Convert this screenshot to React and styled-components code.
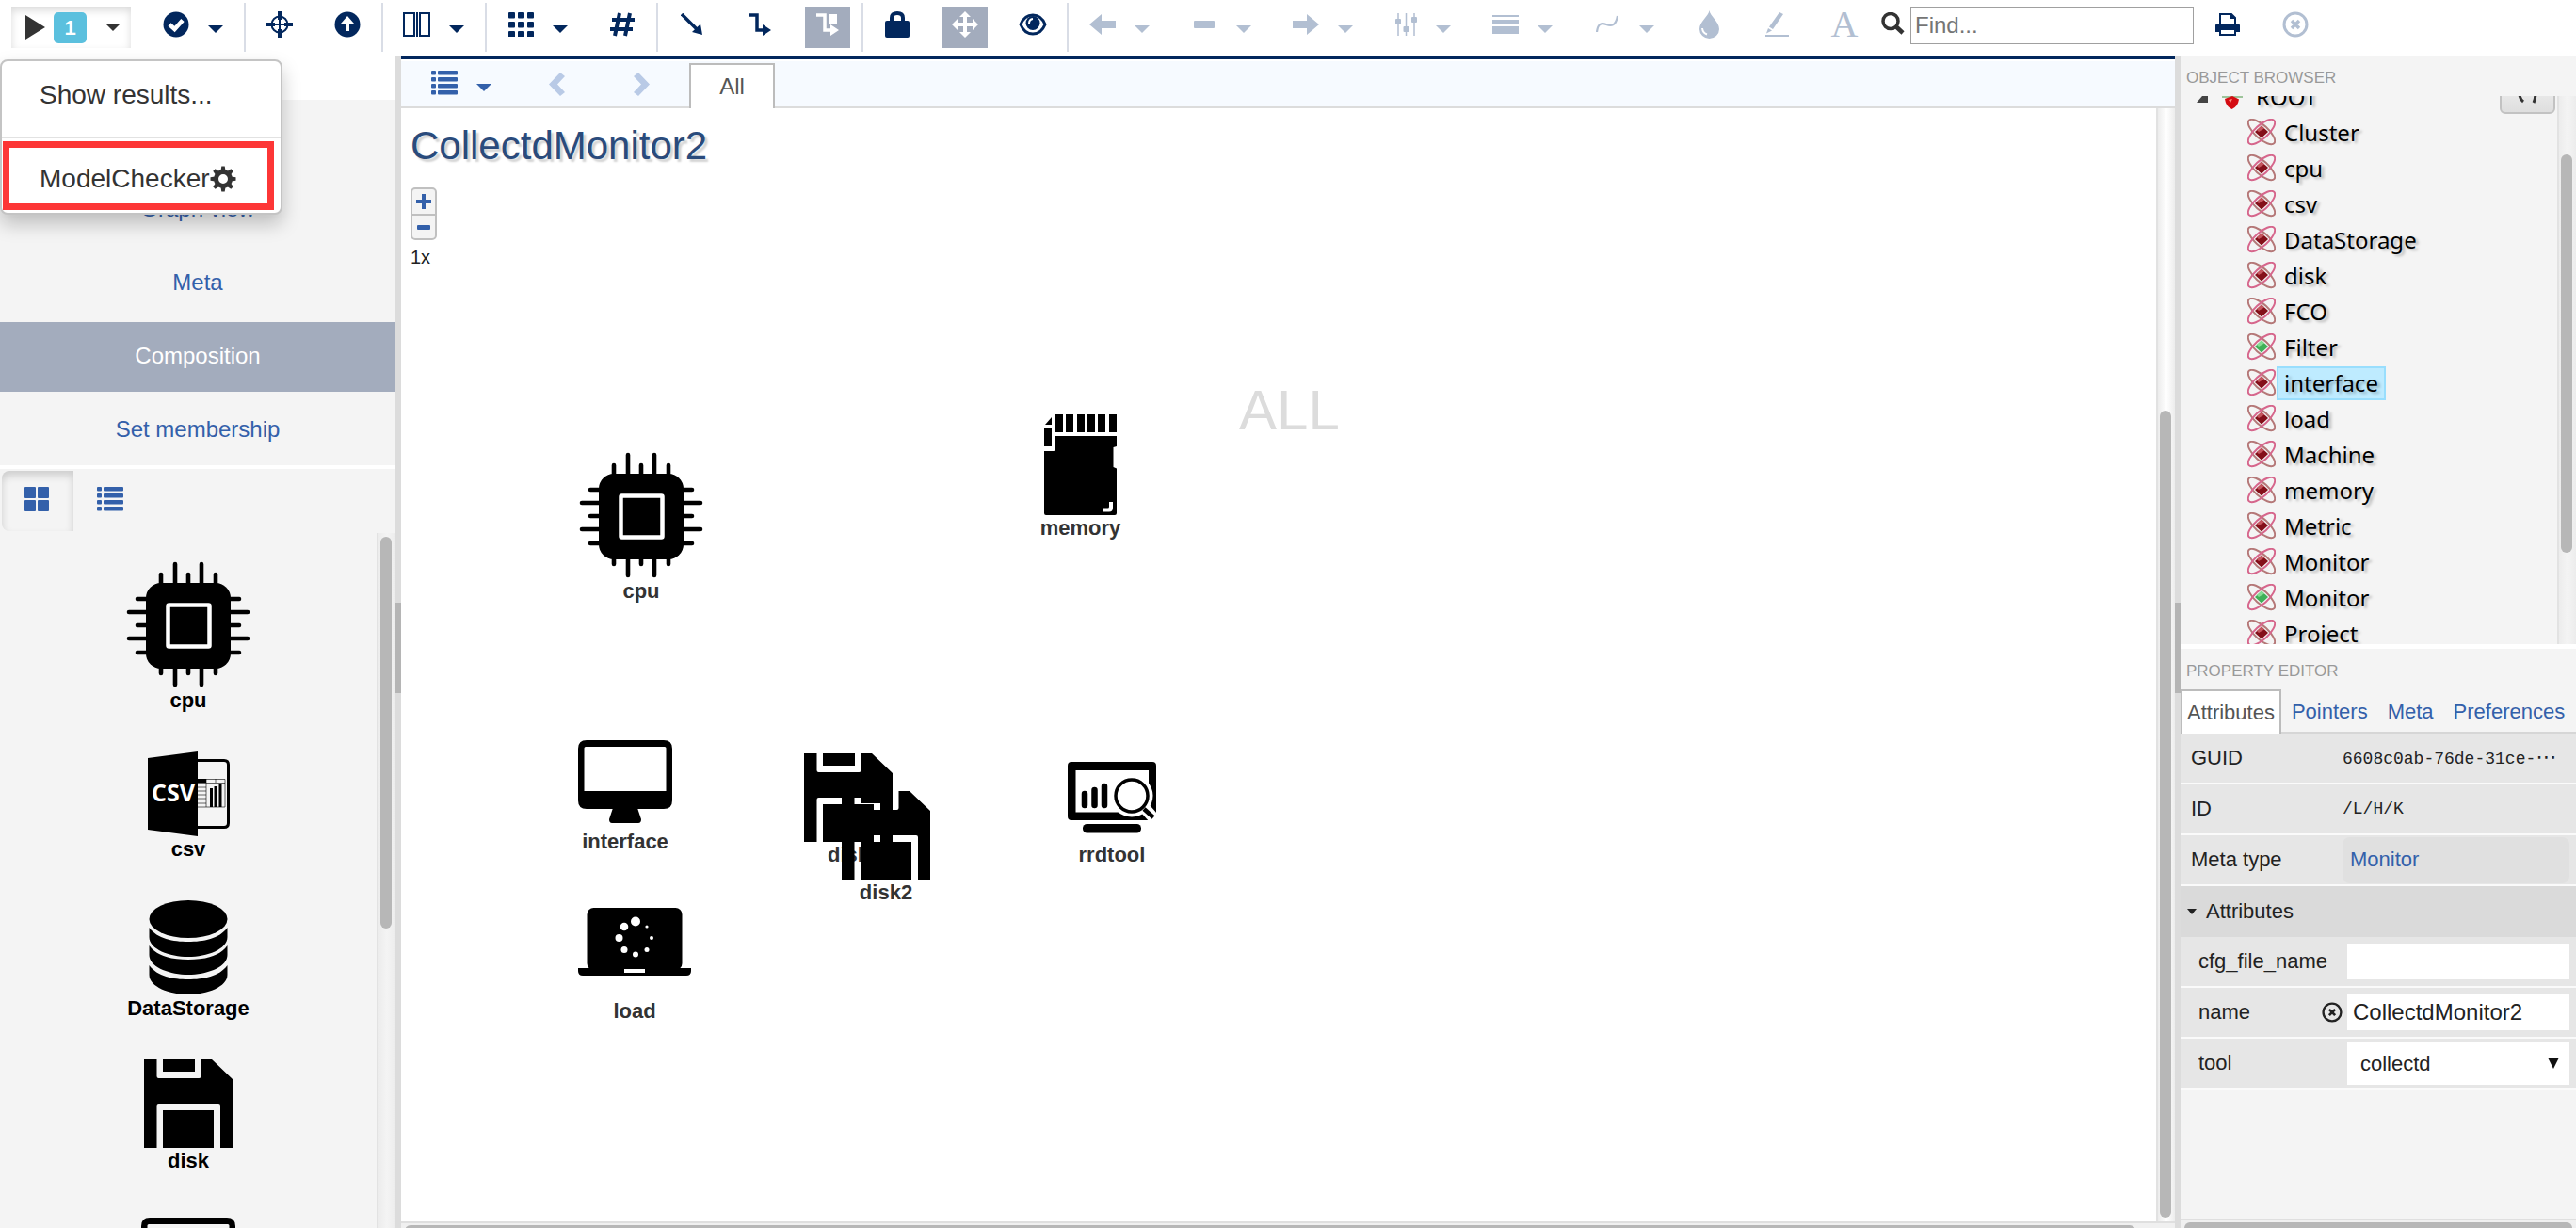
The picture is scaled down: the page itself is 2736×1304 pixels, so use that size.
import React from "react";
import styled, { createGlobalStyle, css } from "styled-components";

const navy = "#02275d";
const blue = "#3360aa";
const panel = "#f4f4f4";
const faded = "#b2bfd2";

const GlobalStyle = createGlobalStyle`
  *, *::before, *::after { box-sizing: border-box; }
  body { margin: 0; background: #fff; overflow: hidden; }
  body, button, input, select { font-family: "Liberation Sans", Arial, sans-serif; }
  button { border: 0; padding: 0; background: none; color: inherit; font-size: inherit; cursor: pointer; }
  svg { display: block; flex: none; }
  ul { list-style: none; margin: 0; padding: 0; }
  a { text-decoration: none; }
`;

/* ---------- page frame ---------- */

const Page = styled.div`
  display: flex;
  flex-direction: column;
  height: 100vh;
`;
const Body = styled.div`
  flex: 1;
  min-height: 0;
  display: flex;
`;
const Splitter = styled.div`
  flex: none;
  width: 6px;
  background: #dcdcdc;
  display: flex;
  flex-direction: column;
  justify-content: center;
  padding-top: 12px;
`;
const Grip = styled.div`
  height: 96px;
  background: #b5b5b5;
`;

/* ---------- scroll bars ---------- */

const Track = styled.div`
  flex: none;
  width: 20px;
  padding: 4px;
  border-left: 2px solid #e2e2e2;
  padding-left: 2px;
  background: linear-gradient(to right, #ececec, ${(p) => p.$bg || panel} 50%, #ececec);
`;
const Thumb = styled.div`
  width: 12px;
  height: ${(p) => p.$size};
  border-radius: 6px;
  background: #b7b7b7;
`;
const BottomTrack = styled.div`
  flex: none;
  height: ${(p) => p.$height}px;
  padding: 2px 4px 0;
  border-top: 2px solid #dfdfdf;
  background: #f0f0f0;
  overflow: hidden;
`;
const BottomThumb = styled.div`
  width: ${(p) => p.$size};
  height: 12px;
  border-radius: 6px;
  background: #b7b7b7;
`;

/* ---------- top tool bar ---------- */

const ToolBar = styled.header`
  flex: none;
  display: flex;
  height: 59px;
  background: #fff;
`;
const Group = styled.div`
  display: flex;
  gap: 24px;
  padding: 7px 12px 0;
`;
const Divider = styled.div`
  width: 2px;
  height: 52px;
  margin-top: 3px;
  background: #d9dde6;
`;
const Split = styled.div`
  display: flex;
`;
const Tool = styled.button`
  width: ${(p) => (p.$narrow ? 44 : 48)}px;
  height: 44px;
  padding-bottom: 6px;
  display: flex;
  align-items: center;
  justify-content: center;
  color: ${(p) => (p.$on ? "#fff" : p.$off ? faded : p.$color || navy)};
  background: ${(p) => (p.$on ? "#a3acbd" : "transparent")};
`;
const CaretTool = styled.button`
  width: 36px;
  height: 44px;
  padding-top: 4px;
  display: flex;
  align-items: center;
  justify-content: center;
  color: ${(p) => (p.$off ? faded : p.$color || navy)};
`;
const RunTool = styled.button`
  width: 127px;
  height: 44px;
  padding: 0 11px 0 15px;
  display: flex;
  align-items: center;
  color: #333;
  box-shadow: inset 0 4px 8px rgba(0, 0, 0, 0.15);
`;
const Badge = styled.span`
  width: 35px;
  height: 33px;
  margin: 0 20px 0 9px;
  border-radius: 5px;
  background: #5bc0de;
  color: #fff;
  font-size: 22px;
  font-weight: bold;
  line-height: 33px;
  text-align: center;
`;
const FontGlyph = styled.span`
  font-family: "Liberation Serif", serif;
  font-size: 40px;
  line-height: 44px;
`;
const Search = styled.div`
  display: flex;
  align-items: flex-start;
  gap: 6px;
  padding: 7px 0 0 3px;
`;
const SearchMark = styled.span`
  padding-top: 6px;
`;
const FindBox = styled.input`
  width: 301px;
  height: 40px;
  padding: 0 4px;
  border: 1px solid #a0a0a0;
  font-size: 24px;
  &::placeholder { color: #757575; opacity: 1; }
`;

/* ---------- run menu ---------- */

const RunMenu = styled.ul`
  position: absolute;
  z-index: 5;
  left: 0;
  top: 63px;
  width: 300px;
  border: 2px solid #c4c4c4;
  border-radius: 8px;
  background: #fff;
  box-shadow: 0 10px 20px rgba(0, 0, 0, 0.22);
`;
const RunMenuItem = styled.li`
  display: flex;
  height: ${(p) => (p.$marked ? 73 : 82)}px;
  ${(p) =>
    p.$marked
      ? css`margin: 3px 7px 3px 1px; border: 7px solid #fd3636;`
      : css`border-bottom: 2px solid #e2e2e2;`}
`;
const MenuButton = styled.button`
  flex: 1;
  display: flex;
  align-items: center;
  padding: ${(p) => (p.$marked ? "6px 0 0 32px" : "0 0 8px 40px")};
  color: #333;
  font-size: 28px;
`;

/* ---------- left side ---------- */

const Side = styled.aside`
  flex: none;
  width: 420px;
  display: flex;
  flex-direction: column;
  background: ${panel};
`;
const SideHead = styled.div`
  flex: none;
  height: 47px;
  background: #fff;
`;
const Views = styled.ul`
  flex: none;
  display: flex;
  flex-direction: column;
  gap: 4px;
  padding-top: 80px;
  border-bottom: 4px solid #fff;
`;
const ViewLink = styled.a`
  display: block;
  height: 74px;
  color: ${(p) => (p.$on ? "#fff" : blue)};
  background: ${(p) => (p.$on ? "#a3acbd" : "transparent")};
  font-size: 24px;
  line-height: 72px;
  text-align: center;
`;
const PaletteTabs = styled.div`
  flex: none;
  display: flex;
  height: 68px;
  padding: 2px;
`;
const PaletteTab = styled.button`
  width: ${(p) => (p.$on ? 76 : 80)}px;
  height: 64px;
  padding: 0 2px 4px 0;
  display: flex;
  align-items: center;
  justify-content: center;
  color: ${blue};
  ${(p) => p.$on && css`border-radius: 8px 0 0 8px; box-shadow: inset 0 5px 8px rgba(0, 0, 0, 0.16);`}
`;
const PaletteBody = styled.div`
  flex: 1;
  min-height: 0;
  display: flex;
`;
const Palette = styled.ul`
  flex: 1;
  display: flex;
  flex-direction: column;
  gap: 42px;
  padding-top: 30px;
  overflow: hidden;
`;
const Part = styled.li`
  flex: none;
  display: flex;
  flex-direction: column;
  align-items: center;
  gap: 2px;
  color: #000;
`;
const PartName = styled.span`
  font-size: 22px;
  font-weight: bold;
  line-height: 24px;
  white-space: nowrap;
`;

/* ---------- centre ---------- */

const Main = styled.main`
  flex: 1;
  min-width: 0;
  display: flex;
  flex-direction: column;
  border-top: 4px solid ${navy};
`;
const SubBar = styled.div`
  flex: none;
  display: flex;
  align-items: flex-end;
  height: 52px;
  padding-left: 22px;
  border-top: 2px solid #fff;
  border-bottom: 2px solid #dcdcdc;
  background: #f6faff;
  color: ${blue};
`;
const Steps = styled.div`
  display: flex;
  gap: 24px;
  padding: 0 18px 0 26px;
`;
const Step = styled.button`
  width: 66px;
  height: 48px;
  display: flex;
  align-items: center;
  justify-content: center;
  color: #b9cae6;
`;
const AspectTab = styled.button`
  width: 91px;
  height: 48px;
  margin-bottom: -2px;
  border: 2px solid #bcbcbc;
  border-bottom: 0;
  background: #fff;
  color: #555;
  font-size: 24px;
  line-height: 46px;
`;
const Work = styled.div`
  flex: 1;
  min-height: 0;
  display: flex;
`;
const Canvas = styled.section`
  flex: 1;
  position: relative;
  overflow: hidden;
  padding: 16px 10px;
  background: #fff;
`;
const CanvasTrack = styled(Track)`
  display: flex;
  flex-direction: column;
  justify-content: flex-end;
`;
const Title = styled.h1`
  margin: 0 0 20px;
  color: #2a4b7c;
  font-size: 42px;
  font-weight: normal;
  line-height: 48px;
  text-shadow: 3px 3px 2px #d4d4d4;
`;
const Zoom = styled.div`
  width: 28px;
  border: 2px solid #c0c0c0;
  border-radius: 5px;
  background: ${panel};
  color: ${blue};
`;
const ZoomButton = styled.button`
  width: 24px;
  height: 26px;
  display: flex;
  align-items: center;
  justify-content: center;
  & + & { border-top: 2px solid #c0c0c0; }
`;
const ZoomLevel = styled.div`
  margin-top: 6px;
  color: #222;
  font-size: 20px;
  line-height: 24px;
`;
const Watermark = styled.div`
  position: absolute;
  left: 890px;
  top: 291px;
  color: #dcdcdc;
  font-size: 60px;
  line-height: 60px;
`;
const Node = styled.div`
  position: absolute;
  left: ${(p) => p.$x}px;
  top: ${(p) => p.$y}px;
  width: ${(p) => p.$w}px;
  display: flex;
  flex-direction: column;
  align-items: center;
  gap: 2px;
`;
const NodeName = styled(PartName)`
  color: #333;
`;

/* ---------- right side ---------- */

const Right = styled.aside`
  flex: none;
  width: 420px;
  display: flex;
  flex-direction: column;
  background: ${panel};
`;
const Caption = styled.h2`
  flex: none;
  height: 43px;
  margin: 0;
  padding: 4px 6px 0;
  color: #999;
  font-size: 17px;
  font-weight: normal;
  line-height: 40px;
`;
const TreeBox = styled.div`
  flex: none;
  display: flex;
  height: 582px;
  overflow: hidden;
`;
const Tree = styled.ul`
  flex: 1;
  margin-top: -18px;
`;
const ObjectTrack = styled(Track)`
  padding-top: 62px;
`;
const TreeRow = styled.li`
  display: flex;
  align-items: center;
  height: 38px;
  gap: 1px;
  padding-left: ${(p) => (p.$root ? 16 : 71)}px;
`;
const TreeName = styled.a`
  padding: 0 6px;
  border: 2px solid ${(p) => (p.$on ? "#99defd" : "transparent")};
  background: ${(p) => (p.$on ? "#beebff" : "transparent")};
  color: #000;
  font-family: "Noto Sans", sans-serif;
  font-size: 24px;
  line-height: 32px;
  text-shadow: 3px 2px 3px rgba(0, 0, 0, 0.25);
`;
const FilterButton = styled.button`
  width: 59px;
  height: 44px;
  margin: 0 2px 8px auto;
  border: 2px solid #c2c2c2;
  border-radius: 6px;
  background: linear-gradient(#f4f4f4, #dedede);
  display: flex;
  align-items: center;
  justify-content: center;
`;
const Editor = styled.section`
  flex: 1;
  min-height: 0;
  display: flex;
  flex-direction: column;
  border-top: 5px solid #fff;
`;
const EditorTabs = styled.div`
  display: flex;
  height: 47px;
  border-bottom: 2px solid #d6d6d6;
`;
const EditorTab = styled.button`
  height: 49px;
  padding: ${(p) => (p.$on ? "0 5px 1px" : "2px 10px 3px")};
  border: ${(p) => (p.$on ? "2px solid #bcbcbc" : "0")};
  border-bottom: 0;
  background: ${(p) => (p.$on ? "#fff" : "none")};
  color: ${(p) => (p.$on ? "#555" : blue)};
  font-size: 22px;
  line-height: 42px;
  & + & { margin-left: 1px; }
`;
const Properties = styled.div`
  flex: 1;
  font-size: 22px;
  color: #222;
`;
const Property = styled.div`
  display: flex;
  align-items: center;
  height: 54px;
  padding: 0 7px 0 ${(p) => (p.$nested ? 19 : 11)}px;
  border-bottom: 2px solid #fafafa;
  background: #e6e6e6;
`;
const PropertyName = styled.label`
  flex: 1;
`;
const Value = styled.output`
  width: 241px;
  font-family: "Liberation Mono", monospace;
  font-size: 18px;
  line-height: 24px;
  white-space: nowrap;
`;
const Dots = styled.span`
  font-family: "DejaVu Sans", sans-serif;
  font-size: 22px;
  line-height: 22px;
`;
const MetaLink = styled.a`
  width: 241px;
  height: 49px;
  padding-left: 8px;
  border-radius: 8px;
  background: #e0e0e0;
  color: ${blue};
  line-height: 47px;
`;
const Section = styled.button`
  display: flex;
  align-items: center;
  gap: 10px;
  width: 100%;
  height: 54px;
  padding-left: 7px;
  background: #dadada;
  font-size: 22px;
`;
const TextBox = styled.input`
  width: 236px;
  height: 38px;
  padding: 0 6px;
  border: 0;
  background: #fff;
  color: #222;
  font-size: 24px;
`;
const Reset = styled.button`
  margin-right: 5px;
`;
const SelectBox = styled.div`
  position: relative;
  width: 236px;
`;
const Choice = styled.select`
  appearance: none;
  display: block;
  width: 100%;
  height: 46px;
  padding: 0 14px;
  border: 0;
  border-radius: 0;
  background: #fff;
  color: #222;
  font-size: 22px;
`;
const ChoiceMark = styled.span`
  position: absolute;
  right: 11px;
  top: 17px;
  pointer-events: none;
`;

/* ---------- icons ---------- */

const Svg = ({ w, h, box, children }) => (
  <svg width={w} height={h} viewBox={box || `0 0 ${w} ${h}`} fill="currentColor" aria-hidden="true">
    {children}
  </svg>
);

const CaretIcon = () => (
  <Svg w={16} h={8}><path d="M0 0H16L8 8Z" /></Svg>
);
const icons = {
  play: <Svg w={21} h={26}><path d="M0 0L21 13L0 26Z" /></Svg>,
  check: (
    <Svg w={28} h={28}>
      <circle cx="14" cy="14" r="13.5" />
      <path d="M7 14L12.500 19L21 9.500" fill="none" stroke="#fff" strokeWidth="4.500" />
    </Svg>
  ),
  crosshair: (
    <Svg w={28} h={28}>
      <g fill="none" stroke="currentColor">
        <circle cx="14" cy="14" r="8.500" strokeWidth="2" />
        <path d="M14 0V9M14 19V28M0 14H9M19 14H28" strokeWidth="4" />
        <path d="M14 9V19M9 14H19" strokeWidth="2" />
      </g>
    </Svg>
  ),
  up: (
    <Svg w={28} h={28}>
      <circle cx="14" cy="14" r="13.5" />
      <path d="M14 5L21 13H16V21H12V13H7Z" fill="#fff" />
    </Svg>
  ),
  columns: (
    <Svg w={30} h={28}>
      <g fill="none" stroke="currentColor" strokeWidth="2">
        <path d="M1 2H12V26H1ZM18 2H28V26H18Z" />
        <path d="M15 1V27" />
      </g>
    </Svg>
  ),
  grid: (
    <Svg w={27} h={26}>
      {[0, 10, 20].map((y) => [0, 10, 20].map((x) => <rect key={`${x}-${y}`} x={x} y={y} width="7" height="6.500" rx="1" />))}
    </Svg>
  ),
  hash: (
    <Svg w={28} h={26}>
      <path d="M11 1L6 25M22 1L17 25M3 8H27M1 18H25" fill="none" stroke="currentColor" strokeWidth="4" />
    </Svg>
  ),
  diagonal: (
    <Svg w={24} h={24}>
      <path d="M1 1L17 17" stroke="currentColor" strokeWidth="3.500" />
      <path d="M23 23L12 20L21 11.500Z" />
    </Svg>
  ),
  elbow: (
    <Svg w={26} h={24}>
      <path d="M1 2H10V18H18" fill="none" stroke="currentColor" strokeWidth="3.500" />
      <path d="M16 12L25 18L16 24Z" />
    </Svg>
  ),
  elbowBox: (
    <Svg w={26} h={24}>
      <path d="M1 2H10V18H18" fill="none" stroke="currentColor" strokeWidth="3.500" />
      <path d="M16 12L25 18L16 24ZM14 1H23V11H14Z" />
    </Svg>
  ),
  lock: (
    <Svg w={26} h={28}>
      <rect y="10" width="26" height="18" rx="2" />
      <path d="M7 11V7Q7 2 13 2T19 7V11" fill="none" stroke="currentColor" strokeWidth="4" />
    </Svg>
  ),
  move: (
    <Svg w={28} h={28}>
      <path d="M14 0L20 6H16V12H22V8L28 14L22 20V16H16V22H20L14 28L8 22H12V16H6V20L0 14L6 8V12H12V6H8Z" />
    </Svg>
  ),
  eye: (
    <Svg w={30} h={24}>
      <path d="M15 2C8 2 4 7 2 12C4 17 8 22 15 22S26 17 28 12C26 7 22 2 15 2Z" fill="none" stroke="currentColor" strokeWidth="3" />
      <circle cx="15" cy="10.500" r="7.500" />
      <path d="M11 11Q11 6.500 15 6" fill="none" stroke="#fff" strokeWidth="2" />
    </Svg>
  ),
  left: <Svg w={28} h={22}><path d="M0 11L13 0V7H28V15H13V22Z" /></Svg>,
  minus: <Svg w={22} h={8}><rect width="22" height="8" rx="1" /></Svg>,
  right: <Svg w={28} h={22}><path d="M28 11L15 0V7H0V15H15V22Z" /></Svg>,
  sliders: (
    <Svg w={23} h={24}>
      <path d="M3 0V24M11.500 0V24M20 0V24" stroke="currentColor" strokeWidth="1.500" />
      <rect y="6" width="6" height="6" rx="1" />
      <rect x="8.500" y="14" width="6" height="6" rx="1" />
      <rect x="17" y="4" width="6" height="6" rx="1" />
    </Svg>
  ),
  lines: <Svg w={28} h={20}><path d="M0 0H28V2H0ZM0 5H28V9H0ZM0 12H28V20H0Z" /></Svg>,
  curve: (
    <Svg w={24} h={20}>
      <path d="M1 18C2 9 6 8 11 10S21 12 23 1" fill="none" stroke="currentColor" strokeWidth="2.200" />
    </Svg>
  ),
  drop: (
    <Svg w={21} h={30}>
      <path d="M10.500 0C11 6 21 12 21 20A10.500 10 0 0 1 0 20C0 12 10 6 10.500 0Z" />
      <path d="M3 19Q3.500 24 8 25.500" fill="none" stroke="#fff" strokeWidth="2" />
    </Svg>
  ),
  pen: (
    <Svg w={25} h={26}>
      <path d="M0 24H25V26H0ZM15 0L19 2L8 18L4 15.500ZM3 17L7 19.500L1 22.500Z" />
    </Svg>
  ),
  search: (
    <Svg w={25} h={24}>
      <circle cx="10" cy="9.500" r="8" fill="none" stroke="#333" strokeWidth="3.500" />
      <path d="M15.500 15L23 22" stroke="#333" strokeWidth="4.500" />
    </Svg>
  ),
  print: (
    <Svg w={26} h={24}>
      <path d="M5 11V1H17L21 5V11" fill="none" stroke="currentColor" strokeWidth="2" />
      <path d="M16 0L22 6H16ZM2 11H24Q26 11 26 13V20H0V13Q0 11 2 11Z" />
      <rect x="5" y="17" width="16" height="6" fill="#fff" stroke="currentColor" strokeWidth="2" />
    </Svg>
  ),
  close: (
    <Svg w={28} h={28}>
      <circle cx="14" cy="14" r="12" fill="none" stroke="currentColor" strokeWidth="3" />
      <path d="M10 10L18 18M18 10L10 18" stroke="currentColor" strokeWidth="3.500" />
    </Svg>
  ),
  gear: (
    <Svg w={28} h={28}>
      <circle cx="14" cy="14" r="7.500" fill="none" stroke="#333" strokeWidth="5" />
      {[0, 45, 90, 135, 180, 225, 270, 315].map((a) => (
        <path key={a} d="M11.500 5L12.300 0.500H15.700L16.500 5Z" transform={`rotate(${a} 14 14)`} />
      ))}
    </Svg>
  ),
  list: (
    <Svg w={28} h={26}>
      {[0, 7, 14, 21].map((y) => (
        <g key={y}>
          <rect y={y} width="5" height="4.500" rx="1" />
          <rect x="7" y={y} width="21" height="4.500" rx="1" />
        </g>
      ))}
    </Svg>
  ),
  tiles: (
    <Svg w={26} h={26}>
      {[0, 14].map((y) => [0, 14].map((x) => <rect key={`${x}-${y}`} x={x} y={y} width="12" height="12" rx="1" />))}
    </Svg>
  ),
  prev: <Svg w={17} h={25}><path d="M12 0L17 4L9 12.500L17 21L12 25L0 12.500Z" /></Svg>,
  next: <Svg w={17} h={25}><path d="M5 0L0 4L8 12.500L0 21L5 25L17 12.500Z" /></Svg>,
  plus: <Svg w={16} h={16}><path d="M6 0H10V6H16V10H10V16H6V10H0V6H6Z" /></Svg>,
  dash: <Svg w={14} h={5}><rect width="14" height="5" rx="1" /></Svg>,
};

/* ---------- component drawings ---------- */

const parts = {
  cpu: {
    w: 132,
    draw: (
      <Svg w={132} h={134}>
        <path d="M37 14V119M52 3V131M66 14V119M80 3V131M95 14V119M12 40H120M3 54H129M12 68H120M3 82H129M12 97H120" stroke="currentColor" strokeWidth="4.600" strokeLinecap="round" />
        <rect x="21" y="23" width="90" height="91" rx="16" />
        <rect x="44.500" y="46.500" width="44" height="44" rx="1" fill="none" stroke="#fff" strokeWidth="4.500" />
      </Svg>
    ),
  },
  csv: {
    w: 87,
    draw: (
      <Svg w={87} h={90}>
        <path d="M53 9.500H81Q85.500 9.500 85.500 14V76Q85.500 80.500 81 80.500H53" fill="none" stroke="currentColor" strokeWidth="3" />
        <path d="M53 29.500H82V59H53M53 33.500H82M62 29V59M72 29V33M53 38H62M53 42H62M53 46H62M53 50H62M53 55H62" fill="none" stroke="currentColor" strokeWidth="1" opacity="0.600" />
        <path d="M0 7L53 0V90L0 83ZM53 29H62V33H53ZM66 39H69V59H66ZM70.500 37H73.500V59H70.500ZM75.500 34H78.500V59H75.500Z" />
        <text x="27" y="53" textAnchor="middle" fill="#fff" fontFamily="Open Sans, sans-serif" fontWeight="bold" fontSize="25">CSV</text>
      </Svg>
    ),
  },
  DataStorage: {
    w: 84,
    draw: (
      <Svg w={84} h={101}>
        <ellipse cx="42" cy="20" rx="41.500" ry="20" />
        {[0, 19, 40].map((y) => (
          <path key={y} transform={`translate(0 ${y})`} d="M0.500 29C9 41 26 44 42 44S75 41 83.500 29V39C83.500 52 62 60 42 60S0.500 52 0.500 39Z" />
        ))}
      </Svg>
    ),
  },
  disk: {
    w: 94,
    draw: (
      <Svg w={94} h={94}>
        <path d="M0 0H13.500V18Q13.500 20 15.500 20H58.500Q60.500 20 60.500 18V0H72L94 21V94H81V49Q81 47 79 47H15.500Q13.500 47 13.500 49V94H0ZM20 0H54V13H20ZM20 54H74V94H20Z" />
      </Svg>
    ),
  },
  interface: {
    w: 100,
    draw: (
      <Svg w={100} h={100} box="0 -6 100 100">
        <path fillRule="evenodd" d="M9 0H91Q100 0 100 9V64Q100 73 91 73H9Q0 73 0 64V9Q0 0 9 0ZM8 7Q6.500 7 6.500 8.500V54H93.500V8.500Q93.500 7 92 7Z" />
        <path d="M37 72H63L67 84Q67 88 64 88H36Q33 88 33 84Z" />
      </Svg>
    ),
  },
  memory: {
    w: 77,
    draw: (
      <Svg w={77} h={107}>
        {[12, 23, 35, 46, 57, 69].map((x) => <rect key={x} x={x} width="8" height="19" />)}
        <path d="M1 11L8 3V11ZM0 15H8V34H0ZM12 23H77V34L73.500 35V56L77 57.500V105Q77 107 75 107H2Q0 107 0 105V39H10Q12 39 12 37Z" />
        <path d="M69 93H73V99Q73 103.500 69 103.500H63V99.500H67.500Q69 99.500 69 98Z" fill="#fff" />
      </Svg>
    ),
  },
  rrdtool: {
    w: 94,
    draw: (
      <Svg w={94} h={94} box="0 -9 94 94">
        <path fillRule="evenodd" d="M4 0H90Q94 0 94 4V58Q94 62 90 62H4Q0 62 0 58V4Q0 0 4 0ZM8.500 9V53.500H86V9Z" />
        <circle cx="68" cy="36" r="22.500" fill="#fff" />
        <path d="M79 46L95 64" stroke="#fff" strokeWidth="12" />
        <path d="M18 34V46M28.500 30V46M39 26V46" stroke="currentColor" strokeWidth="6.500" strokeLinecap="round" />
        <circle cx="68" cy="36" r="17" fill="none" stroke="currentColor" strokeWidth="3.500" />
        <path d="M81 50L91 59" stroke="currentColor" strokeWidth="4.500" />
        <rect x="16" y="66" width="62" height="9.500" rx="4.500" />
      </Svg>
    ),
  },
  load: {
    w: 120,
    draw: (
      <Svg w={120} h={120} box="0 -24 120 120">
        <rect x="9.500" width="101" height="66" rx="7" />
        <path d="M0 64H120V67Q120 72 115 72H5Q0 72 0 67Z" />
        <g fill="#fff">
          <rect x="49" y="65" width="22" height="4" />
          <circle cx="61" cy="14.500" r="5" />
          <circle cx="49" cy="20" r="4.300" />
          <circle cx="43.500" cy="32" r="4" />
          <circle cx="49" cy="44.500" r="3.500" />
          <circle cx="61" cy="49.500" r="3" />
          <circle cx="73" cy="44.500" r="2.500" />
          <circle cx="78" cy="32" r="2" />
          <circle cx="73" cy="20" r="1.600" />
        </g>
      </Svg>
    ),
  },
};

const Atom = ({ green }) => (
  <svg width="30" height="30" viewBox="0 0 30 30" aria-hidden="true">
    <g fill="none" strokeWidth="2">
      <ellipse cx="15" cy="14" rx="18" ry="7" transform="rotate(42 15 14)" stroke="#b57878" />
      <ellipse cx="15" cy="14" rx="18" ry="7" transform="rotate(-42 15 14)" stroke="#d6668c" />
    </g>
    <path d="M15 7.500L22 14L15 20.500L8 14Z" fill={green ? "#3fb058" : "#84101a"} />
    <path d="M15 7.500L18 10.500L12 14L10 12Z" fill={green ? "#86dd93" : "#c4565e"} />
  </svg>
);
const Gem = () => (
  <svg width="30" height="30" viewBox="0 0 30 30" aria-hidden="true">
    <path d="M3 15H25" fill="none" stroke="#9dc49a" strokeWidth="2" />
    <path d="M6 17L14 14L21 17.500Q20 25 13.500 28Q7 25 6 17Z" fill="#d40b12" />
    <path d="M10 18L14 17L12 21Z" fill="#ff8a80" />
  </svg>
);

/* ---------- data ---------- */

const palette = ["cpu", "csv", "DataStorage", "disk", "interface"];
const nodes = [
  { name: "cpu", kind: "cpu", x: 189, y: 365 },
  { name: "memory", kind: "memory", x: 683, y: 325 },
  { name: "interface", kind: "interface", x: 188, y: 665 },
  { name: "disk", kind: "disk", x: 428, y: 685 },
  { name: "disk2", kind: "disk", x: 468, y: 725 },
  { name: "rrdtool", kind: "rrdtool", x: 708, y: 685 },
  { name: "load", kind: "load", x: 188, y: 825 },
];
const tree = [
  { name: "Cluster" },
  { name: "cpu" },
  { name: "csv" },
  { name: "DataStorage" },
  { name: "disk" },
  { name: "FCO" },
  { name: "Filter", green: true },
  { name: "interface", on: true },
  { name: "load" },
  { name: "Machine" },
  { name: "memory" },
  { name: "Metric" },
  { name: "Monitor" },
  { name: "Monitor", green: true },
  { name: "Project" },
];
const views = ["Graph view", "Meta", "Composition", "Set membership"];
const tabs = ["Attributes", "Pointers", "Meta", "Preferences"];

const SplitTool = ({ label, icon, off, narrow, color }) => (
  <Split>
    <Tool aria-label={label} $off={off} $narrow={narrow} $color={color}>{icon}</Tool>
    <CaretTool aria-label={`${label} options`} $off={off} $color={color}><CaretIcon /></CaretTool>
  </Split>
);

function TopBar() {
  return (
    <ToolBar>
      <Group>
        <RunTool aria-label="Run">
          {icons.play}
          <Badge>1</Badge>
          <CaretIcon />
        </RunTool>
        <SplitTool label="Check" icon={icons.check} />
      </Group>
      <RunMenu>
        <RunMenuItem><MenuButton>Show results...</MenuButton></RunMenuItem>
        <RunMenuItem $marked><MenuButton $marked>ModelChecker{icons.gear}</MenuButton></RunMenuItem>
      </RunMenu>
      <Divider />
      <Group>
        <Tool aria-label="Locate">{icons.crosshair}</Tool>
        <Tool aria-label="Parent">{icons.up}</Tool>
      </Group>
      <Divider />
      <Group><SplitTool label="Split" icon={icons.columns} /></Group>
      <Divider />
      <Group>
        <SplitTool label="Grid" icon={icons.grid} />
        <Tool aria-label="Snap">{icons.hash}</Tool>
      </Group>
      <Divider />
      <Group>
        <Tool aria-label="Straight">{icons.diagonal}</Tool>
        <Tool aria-label="Elbow">{icons.elbow}</Tool>
        <Tool aria-label="Avoid" $on>{icons.elbowBox}</Tool>
      </Group>
      <Divider />
      <Group>
        <Tool aria-label="Lock">{icons.lock}</Tool>
        <Tool aria-label="Move" $on>{icons.move}</Tool>
        <Tool aria-label="View">{icons.eye}</Tool>
      </Group>
      <Divider />
      <Group>
        <SplitTool off label="Line start" icon={icons.left} />
        <SplitTool off label="Pattern" icon={icons.minus} />
        <SplitTool off label="Line end" icon={icons.right} />
        <SplitTool off narrow label="Levels" icon={icons.sliders} />
        <SplitTool off label="Width" icon={icons.lines} />
        <SplitTool off label="Curve" icon={icons.curve} />
        <Tool aria-label="Fill" $off>{icons.drop}</Tool>
        <Tool aria-label="Border" $off>{icons.pen}</Tool>
        <Tool aria-label="Text color" $off><FontGlyph>A</FontGlyph></Tool>
      </Group>
      <Search>
        <SearchMark>{icons.search}</SearchMark>
        <FindBox placeholder="Find..." aria-label="Find" />
      </Search>
      <Group>
        <Tool aria-label="Print">{icons.print}</Tool>
        <Tool aria-label="Close" $off>{icons.close}</Tool>
      </Group>
    </ToolBar>
  );
}

function LeftSide() {
  return (
    <Side>
      <SideHead />
      <Views>
        {views.map((v) => (
          <li key={v}><ViewLink href="#" $on={v === "Composition"}>{v}</ViewLink></li>
        ))}
      </Views>
      <PaletteTabs>
        <PaletteTab aria-label="Tiles" $on>{icons.tiles}</PaletteTab>
        <PaletteTab aria-label="List">{icons.list}</PaletteTab>
      </PaletteTabs>
      <PaletteBody>
        <Palette>
          {palette.map((name) => (
            <Part key={name}>{parts[name].draw}<PartName>{name}</PartName></Part>
          ))}
        </Palette>
        <Track><Thumb $size="57%" /></Track>
      </PaletteBody>
    </Side>
  );
}

function Centre() {
  return (
    <Main>
      <SubBar>
        <SplitTool label="Visualizer" icon={icons.list} color={blue} />
        <Steps>
          <Step aria-label="Back">{icons.prev}</Step>
          <Step aria-label="Forward">{icons.next}</Step>
        </Steps>
        <AspectTab>All</AspectTab>
      </SubBar>
      <Work>
        <Canvas>
          <Title>CollectdMonitor2</Title>
          <Zoom>
            <ZoomButton aria-label="Zoom in">{icons.plus}</ZoomButton>
            <ZoomButton aria-label="Zoom out">{icons.dash}</ZoomButton>
          </Zoom>
          <ZoomLevel>1x</ZoomLevel>
          <Watermark>ALL</Watermark>
          {nodes.map((n) => (
            <Node key={n.name} $x={n.x} $y={n.y} $w={parts[n.kind].w}>
              {parts[n.kind].draw}
              <NodeName>{n.name}</NodeName>
            </Node>
          ))}
        </Canvas>
        <CanvasTrack $bg="#fff"><Thumb $size="73%" /></CanvasTrack>
      </Work>
      <BottomTrack $height={7}><BottomThumb $size="98%" /></BottomTrack>
    </Main>
  );
}

function RightSide() {
  return (
    <Right>
      <Caption>OBJECT BROWSER</Caption>
      <TreeBox>
        <Tree>
          <TreeRow $root>
            <Svg w={24} h={24}><path d="M13 4V18H1Z" fill="#444" /></Svg>
            <Gem />
            <TreeName href="#">ROOT</TreeName>
            <FilterButton aria-label="Filter">
              <Svg w={24} h={24}><path d="M4 8Q1 16 7 21M19 8Q21 16 18 22" fill="none" stroke="#333" strokeWidth="3" /></Svg>
            </FilterButton>
          </TreeRow>
          {tree.map((t, i) => (
            <TreeRow key={i}>
              <Atom green={t.green} />
              <TreeName href="#" $on={t.on}>{t.name}</TreeName>
            </TreeRow>
          ))}
        </Tree>
        <ObjectTrack><Thumb $size="82%" /></ObjectTrack>
      </TreeBox>
      <Editor>
        <Caption>PROPERTY EDITOR</Caption>
        <EditorTabs>
          {tabs.map((t) => <EditorTab key={t} $on={t === "Attributes"}>{t}</EditorTab>)}
        </EditorTabs>
        <Properties>
          <Property>
            <PropertyName htmlFor="guid">GUID</PropertyName>
            <Value id="guid">6608c0ab-76de-31ce-<Dots>⋯</Dots></Value>
          </Property>
          <Property>
            <PropertyName htmlFor="objid">ID</PropertyName>
            <Value id="objid">/L/H/K</Value>
          </Property>
          <Property>
            <PropertyName as="span">Meta type</PropertyName>
            <MetaLink href="#">Monitor</MetaLink>
          </Property>
          <Section>
            <Svg w={10} h={6}><path d="M0 0H10L5 6Z" /></Svg>
            Attributes
          </Section>
          <Property $nested>
            <PropertyName htmlFor="cfg">cfg_file_name</PropertyName>
            <TextBox id="cfg" defaultValue="" />
          </Property>
          <Property $nested>
            <PropertyName htmlFor="name">name</PropertyName>
            <Reset aria-label="Reset name">
              <Svg w={22} h={22} box="0 0 28 28">
                <circle cx="14" cy="14" r="12" fill="none" stroke="#222" strokeWidth="3" />
                <path d="M10 10L18 18M18 10L10 18" stroke="#222" strokeWidth="3.500" />
              </Svg>
            </Reset>
            <TextBox id="name" defaultValue="CollectdMonitor2" />
          </Property>
          <Property $nested>
            <PropertyName htmlFor="tool">tool</PropertyName>
            <SelectBox>
              <Choice id="tool" defaultValue="collectd"><option>collectd</option></Choice>
              <ChoiceMark><Svg w={12} h={12}><path d="M0 0H12L6 12Z" fill="#111" /></Svg></ChoiceMark>
            </SelectBox>
          </Property>
        </Properties>
        <BottomTrack $height={10}><BottomThumb $size="100%" /></BottomTrack>
      </Editor>
    </Right>
  );
}

export default function App() {
  return (
    <Page>
      <GlobalStyle />
      <TopBar />
      <Body>
        <LeftSide />
        <Splitter><Grip /></Splitter>
        <Centre />
        <Splitter><Grip /></Splitter>
        <RightSide />
      </Body>
    </Page>
  );
}
